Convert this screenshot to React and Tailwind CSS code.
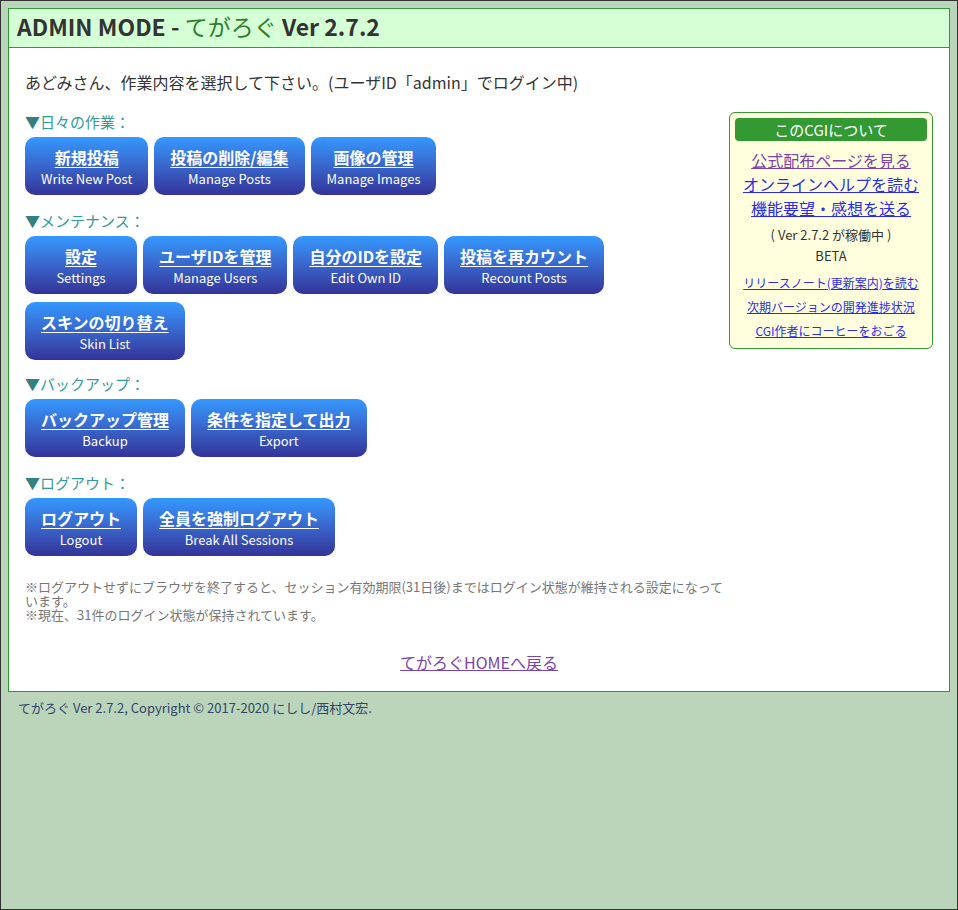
import React from "react";

const FONT = { fontFamily: '"Noto Sans CJK JP", "Noto Sans", sans-serif' };

// Menu groups on the admin page
const groups = [
  {
    label: "日々の作業：",
    gap: "",
    items: [
      { ja: "新規投稿", en: "Write New Post" },
      { ja: "投稿の削除/編集", en: "Manage Posts" },
      { ja: "画像の管理", en: "Manage Images" },
    ],
  },
  {
    label: "メンテナンス：",
    gap: "mt-[16px]",
    items: [
      { ja: "設定", en: "Settings" },
      { ja: "ユーザIDを管理", en: "Manage Users" },
      { ja: "自分のIDを設定", en: "Edit Own ID" },
      { ja: "投稿を再カウント", en: "Recount Posts" },
      { ja: "スキンの切り替え", en: "Skin List" },
    ],
  },
  {
    label: "バックアップ：",
    gap: "mt-[14px]",
    items: [
      { ja: "バックアップ管理", en: "Backup" },
      { ja: "条件を指定して出力", en: "Export" },
    ],
  },
  {
    label: "ログアウト：",
    gap: "mt-[16px]",
    items: [
      { ja: "ログアウト", en: "Logout" },
      { ja: "全員を強制ログアウト", en: "Break All Sessions" },
    ],
  },
];

const MenuButton = ({ ja, en }) => (
  <a
    href="#"
    className="flex min-w-[112px] flex-col items-center rounded-[10px] bg-linear-to-b from-[#3399ff] to-[#333399] px-4 pt-[8px] pb-[7px] text-white"
  >
    <span className="text-[16px] leading-[24px] font-bold underline underline-offset-[3px]">{ja}</span>
    <span className="text-[13px] leading-[19px]">{en}</span>
  </a>
);

const AboutBox = () => (
  <div className="w-[204px] shrink-0 self-start rounded-[6px] border border-[#339933] bg-[#ffffdd] px-[5px] pt-[5px] pb-[5px] text-center">
    <div className="rounded-[4px] bg-[#339933] text-[15px] leading-[23px] text-white">このCGIについて</div>
    <div className="mt-[7px] flex flex-col items-center text-[16px] leading-[24px]">
      <a href="#" className="text-[#7a44aa] underline">公式配布ページを見る</a>
      <a href="#" className="text-[#2b2bee] underline">オンラインヘルプを読む</a>
      <a href="#" className="text-[#2b2bee] underline">機能要望・感想を送る</a>
    </div>
    <div className="mt-[4px] text-[13px] leading-[21px] text-[#333]">( Ver 2.7.2 が稼働中 )</div>
    <div className="text-[13px] leading-[21px] text-[#333]">BETA</div>
    <div className="mt-[5px] flex flex-col items-center text-[12px] leading-[24px]">
      <a href="#" className="text-[#2b2bee] underline">リリースノート(更新案内)を読む</a>
      <a href="#" className="text-[#2b2bee] underline">次期バージョンの開発進捗状況</a>
      <a href="#" className="text-[#2b2bee] underline">CGI作者にコーヒーをおごる</a>
    </div>
  </div>
);

export default function App() {
  return (
    <div style={FONT} className="h-[910px] w-[958px] border border-[#333] bg-[#bbd5bb] p-[7px]">
      <div className="border border-[#339933] bg-white">
        <h1 className="flex h-[39px] items-center border-b border-[#339933] bg-[#d5ffd5] px-[8px] pb-[5px] text-[23px] leading-[30px] font-bold whitespace-pre text-[#333]">
          ADMIN MODE - <span className="font-normal text-[#2d7d2d]">てがろぐ</span> Ver 2.7.2
        </h1>

        <div className="px-[16px] pt-[23px] pb-[19px]">
          <p className="text-[16px] leading-[22px] text-[#333]">
            あどみさん、作業内容を選択して下さい。(ユーザID「admin」でログイン中)
          </p>

          <div className="mt-[19px] flex gap-[5px]">
            <div className="flex-1">
              {groups.map((g) => (
                <div key={g.label} className={g.gap}>
                  <div className="mb-[5px] text-[15px] leading-[20px] text-[#339999]">
                    <span className="text-[#338080]">▼</span>
                    {g.label}
                  </div>
                  <div className="flex flex-wrap gap-x-[6px] gap-y-[8px]">
                    {g.items.map((it) => (
                      <MenuButton key={it.ja} {...it} />
                    ))}
                  </div>
                </div>
              ))}

              <div className="mt-[24px] text-[13px] leading-[14px] text-[#777]">
                <p>※ログアウトせずにブラウザを終了すると、セッション有効期限(31日後)まではログイン状態が維持される設定になっています。</p>
                <p>※現在、31件のログイン状態が保持されています。</p>
              </div>
            </div>
            <AboutBox />
          </div>

          <div className="mt-[30px] text-center text-[16px] leading-[20px]">
            <a href="#" className="text-[#7a44aa] underline">てがろぐHOMEへ戻る</a>
          </div>
        </div>
      </div>

      <p className="px-[10px] pt-[6px] text-[13px] leading-[20px] text-[#334466]">
        てがろぐ Ver 2.7.2, Copyright © 2017-2020 にしし/西村文宏.
      </p>
    </div>
  );
}
